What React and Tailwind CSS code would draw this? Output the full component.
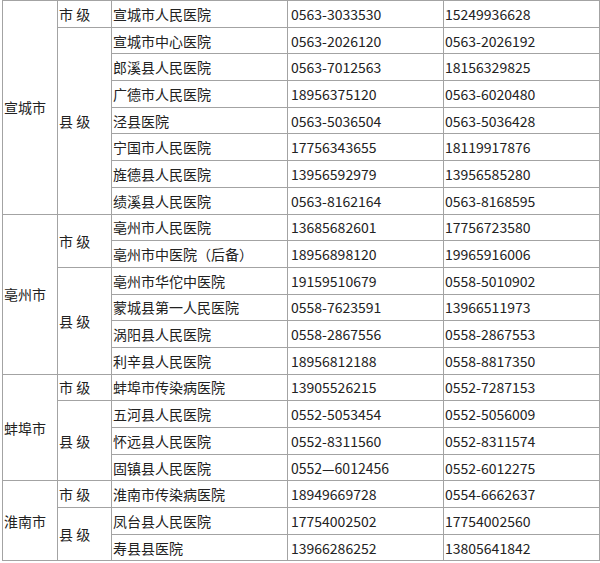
import React from "react";

const cities = [
  {
    name: "宣城市",
    groups: [
      { level: "市 级", rows: [["宣城市人民医院", "0563-3033530", "15249936628"]] },
      {
        level: "县 级",
        rows: [
          ["宣城市中心医院", "0563-2026120", "0563-2026192"],
          ["郎溪县人民医院", "0563-7012563", "18156329825"],
          ["广德市人民医院", "18956375120", "0563-6020480"],
          ["泾县医院", "0563-5036504", "0563-5036428"],
          ["宁国市人民医院", "17756343655", "18119917876"],
          ["旌德县人民医院", "13956592979", "13956585280"],
          ["绩溪县人民医院", "0563-8162164", "0563-8168595"],
        ],
      },
    ],
  },
  {
    name: "亳州市",
    groups: [
      {
        level: "市 级",
        rows: [
          ["亳州市人民医院", "13685682601", "17756723580"],
          ["亳州市中医院（后备）", "18956898120", "19965916006"],
        ],
      },
      {
        level: "县 级",
        rows: [
          ["亳州市华佗中医院", "19159510679", "0558-5010902"],
          ["蒙城县第一人民医院", "0558-7623591", "13966511973"],
          ["涡阳县人民医院", "0558-2867556", "0558-2867553"],
          ["利辛县人民医院", "18956812188", "0558-8817350"],
        ],
      },
    ],
  },
  {
    name: "蚌埠市",
    groups: [
      { level: "市 级", rows: [["蚌埠市传染病医院", "13905526215", "0552-7287153"]] },
      {
        level: "县 级",
        rows: [
          ["五河县人民医院", "0552-5053454", "0552-5056009"],
          ["怀远县人民医院", "0552-8311560", "0552-8311574"],
          ["固镇县人民医院", "0552—6012456", "0552-6012275"],
        ],
      },
    ],
  },
  {
    name: "淮南市",
    groups: [
      { level: "市 级", rows: [["淮南市传染病医院", "18949669728", "0554-6662637"]] },
      {
        level: "县 级",
        rows: [
          ["凤台县人民医院", "17754002502", "17754002560"],
          ["寿县县医院", "13966286252", "13805641842"],
        ],
      },
    ],
  },
];

const cell = "border border-[#a3a3a3] px-[1px] py-0 align-middle text-left font-normal whitespace-nowrap";

export default function App() {
  return (
    <div className="bg-white w-[600px] h-[563px] overflow-hidden pl-[2px] text-[14px] leading-[20px] text-[#222] font-['Noto_Sans_CJK_SC','Noto_Sans',sans-serif]">
      <table className="table-fixed border-collapse w-[597px]">
        <colgroup>
          <col className="w-[55px]" />
          <col className="w-[54px]" />
          <col className="w-[176px]" />
          <col className="w-[156px]" />
          <col className="w-[156px]" />
        </colgroup>
        <tbody>
          {cities.map((c) => {
            const total = c.groups.reduce((n, g) => n + g.rows.length, 0);
            return c.groups.map((g, gi) =>
              g.rows.map((r, ri) => (
                <tr key={c.name + gi + ri} className="h-[26.7px]">
                  {gi === 0 && ri === 0 && (
                    <td rowSpan={total} className={cell}>
                      {c.name}
                    </td>
                  )}
                  {ri === 0 && (
                    <td rowSpan={g.rows.length} className={cell}>
                      {g.level}
                    </td>
                  )}
                  <td className={cell}>{r[0]}</td>
                  <td className={cell + " pl-[3px]"}>{r[1]}</td>
                  <td className={cell}>{r[2]}</td>
                </tr>
              ))
            );
          })}
        </tbody>
      </table>
    </div>
  );
}
